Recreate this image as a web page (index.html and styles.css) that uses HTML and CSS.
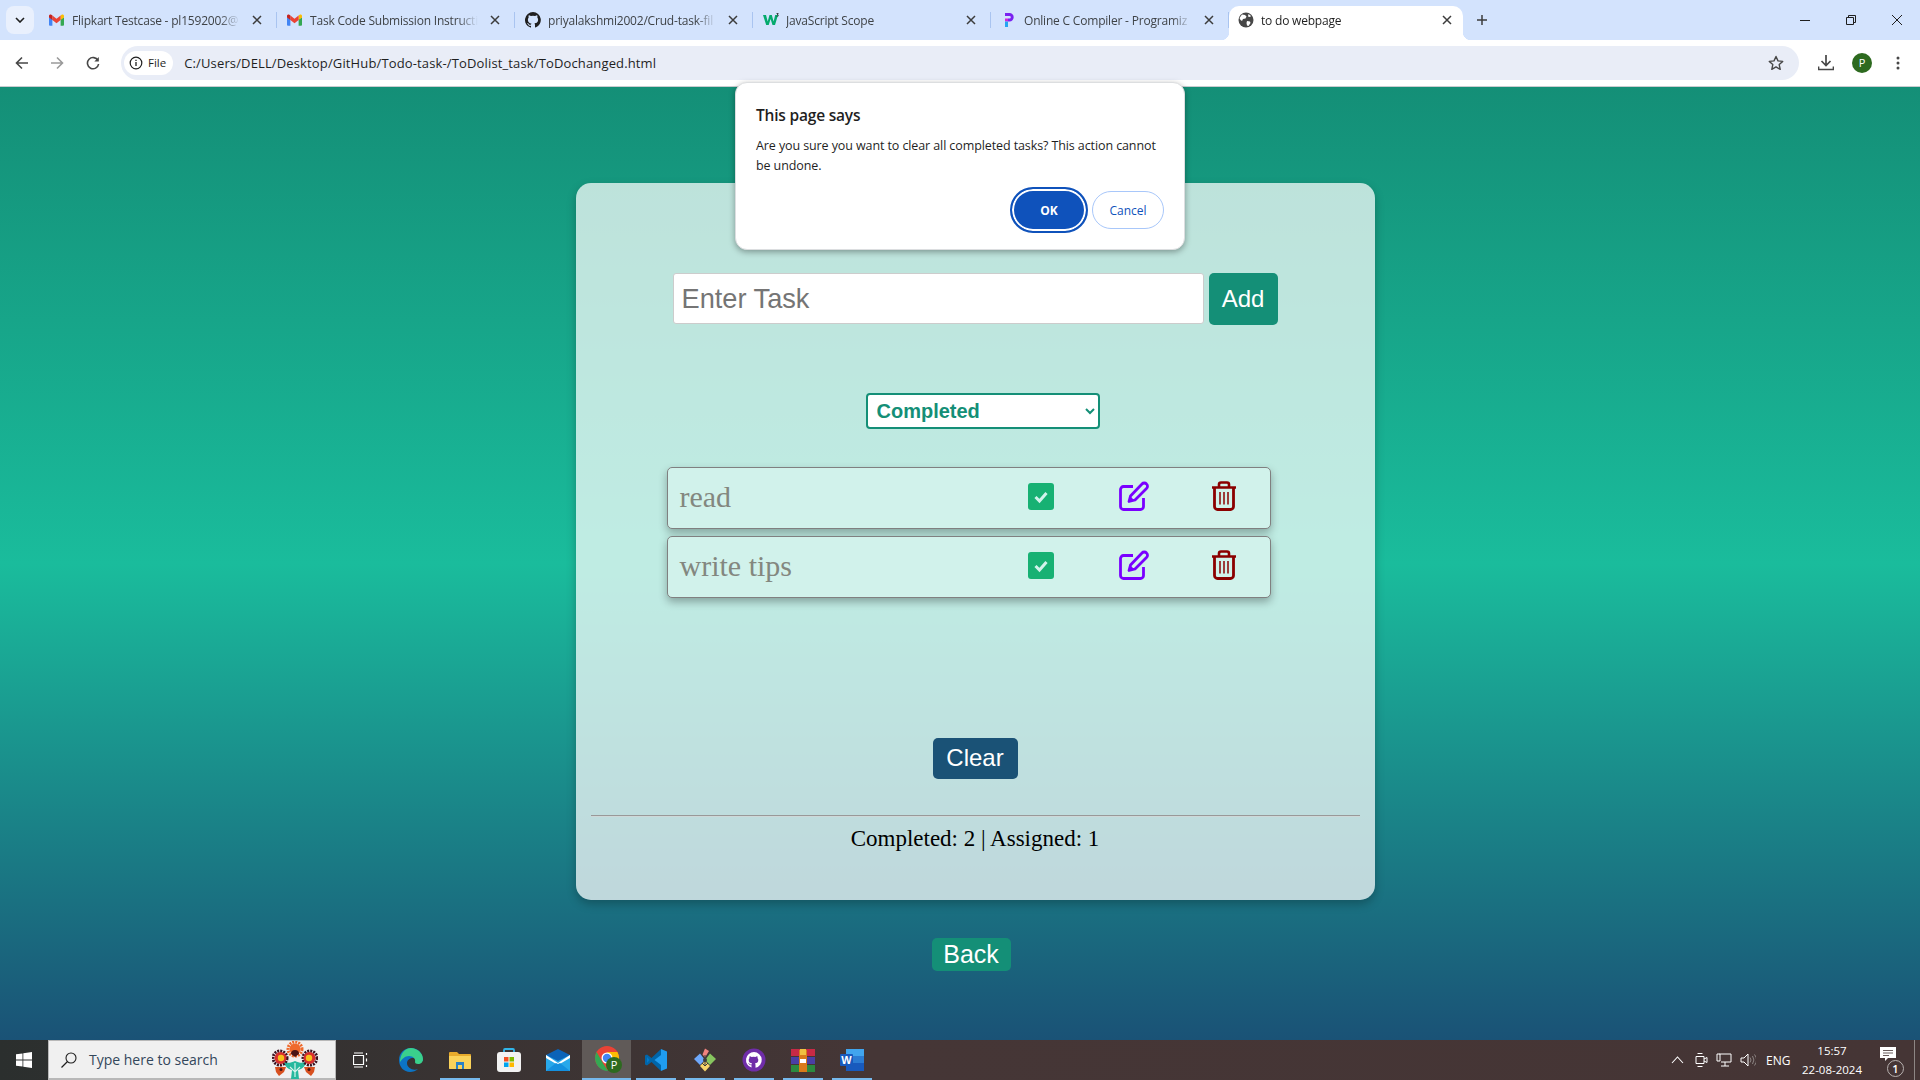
FILE: index.html
```html
<!DOCTYPE html>
<html lang="en">
<head>
  <meta charset="UTF-8">
  <title>to do webpage</title>
  <link rel="stylesheet" href="styles.css">
</head>
<body>
  <svg class="defs" width="0" height="0">
    <symbol id="gmail" viewBox="0 0 16 12">
      <path d="M0 3v8a1 1 0 0 0 1 1h2.6V5.2z" fill="#4285f4"/>
      <path d="M16 3v8a1 1 0 0 1-1 1h-2.6V5.2z" fill="#34a853"/>
      <path d="M12.4 1.2V6L16 3.2V1.6C16 .3 14.5-.4 13.5.4z" fill="#fbbc04"/>
      <path d="M3.6 6V1.2L8 4.6l4.4-3.4V6L8 9.4z" fill="#ea4335"/>
      <path d="M0 1.6v1.6L3.6 6V1.2L2.5.4C1.5-.4 0 .3 0 1.6z" fill="#c5221f"/>
    </symbol>
    <symbol id="close" viewBox="0 0 10 10">
      <path d="M1 1l8 8M9 1l-8 8" stroke="#3c3c3c" stroke-width="1.5" fill="none"/>
    </symbol>
    <symbol id="check" viewBox="0 0 26 27">
      <rect width="26" height="27" rx="3" fill="#17b173"/>
      <path d="M7.5 14l4 4 7-8" stroke="#d1f2eb" stroke-width="3" fill="none"/>
    </symbol>
    <symbol id="edit" viewBox="0 0 30 30">
      <path d="M14 5.500H4.500a3 3 0 0 0-3 3v17a3 3 0 0 0 3 3h17a3 3 0 0 0 3-3V17" fill="none" stroke="#7a00ff" stroke-width="2.800"/>
      <path d="M10 20.500l1.500-5.500L23 3a3 3 0 0 1 4.500 0 3 3 0 0 1 0 4.500L16 19z" fill="none" stroke="#7a00ff" stroke-width="2.800" stroke-linejoin="round"/>
      <path d="M11 15l4.500 4.500L10 20.500z" fill="#7a00ff"/>
    </symbol>
    <symbol id="trash" viewBox="0 0 26 30">
      <path d="M1 6.500h24M8 6V3.500A2 2 0 0 1 10 1.500h6a2 2 0 0 1 2 2V6" fill="none" stroke="#8b0000" stroke-width="2.600"/>
      <path d="M3.500 6.500V25.500a3 3 0 0 0 3 3h13a3 3 0 0 0 3-3V6.500" fill="none" stroke="#8b0000" stroke-width="2.800"/>
      <path d="M9 11v12.500M13 11v12.500M17 11v12.500" stroke="#8b0000" stroke-width="1.500"/>
    </symbol>
  </svg>

  <div class="tabstrip">
    <div class="tab-search">
      <svg width="10" height="6" viewBox="0 0 10 6"><path d="M1 1l4 4 4-4" fill="none" stroke="#1f1f1f" stroke-width="1.600"/></svg>
    </div>
    <div class="tab">
      <svg class="fav fav-mail"><use href="#gmail"/></svg>
      <span class="tab-title">Flipkart Testcase - pl1592002@</span>
      <svg class="tab-x"><use href="#close"/></svg>
    </div>
    <div class="tab">
      <svg class="fav fav-mail"><use href="#gmail"/></svg>
      <span class="tab-title">Task Code Submission Instructi</span>
      <svg class="tab-x"><use href="#close"/></svg>
    </div>
    <div class="tab">
      <svg class="fav" viewBox="0 0 16 16"><path fill="#1f1f1f" d="M8 0a8 8 0 0 0-2.500 15.600c.4.1.5-.2.500-.4v-1.400c-2.200.5-2.700-1-2.700-1-.4-.9-.9-1.200-.9-1.200-.7-.5.100-.5.100-.5.800.1 1.200.8 1.200.8.700 1.200 1.900.9 2.300.7.100-.5.300-.9.500-1.100-1.800-.2-3.600-.9-3.600-4 0-.9.300-1.600.8-2.100-.1-.2-.4-1 .1-2.100 0 0 .7-.2 2.200.8a7.600 7.600 0 0 1 4 0c1.500-1 2.200-.8 2.200-.8.400 1.100.2 1.900.1 2.100.5.600.8 1.300.8 2.100 0 3.100-1.900 3.700-3.700 3.900.3.300.6.800.6 1.500v2.200c0 .2.100.5.600.4A8 8 0 0 0 8 0z"/></svg>
      <span class="tab-title">priyalakshmi2002/Crud-task-fil</span>
      <svg class="tab-x"><use href="#close"/></svg>
    </div>
    <div class="tab">
      <svg class="fav" viewBox="0 0 16 16"><path fill="#04aa6d" d="M0 3h3l1.700 6.500L6.500 3h2.300l1.800 6.500L12.200 3H15l-3 10H9.500L7.600 7 5.700 13H3.200z"/><path fill="#1f1f1f" d="M13.500 1h2v.6l-.8.8c.6.100.9.500.9 1 0 .7-.6 1.100-1.300 1.100-.4 0-.7-.1-.9-.3l.2-.5c.2.100.4.200.7.200.3 0 .5-.2.500-.4 0-.3-.3-.4-.8-.4v-.5l.8-.9h-1.300z"/></svg>
      <span class="tab-title">JavaScript Scope</span>
      <svg class="tab-x"><use href="#close"/></svg>
    </div>
    <div class="tab">
      <svg class="fav" viewBox="0 0 16 16"><path fill="#7a22f0" d="M4 1h4.500a4.200 4.200 0 0 1 0 8.400H7V6.500h1.500a1.300 1.300 0 0 0 0-2.600H4z"/><path fill="#d326d8" d="M4 6.500h3v3H4z"/><path fill="#26a5f2" d="M4 9.500h3V15H4z"/></svg>
      <span class="tab-title">Online C Compiler - Programiz</span>
      <svg class="tab-x"><use href="#close"/></svg>
    </div>
    <div class="tab tab-active">
      <svg class="fav" viewBox="0 0 16 16"><circle cx="8" cy="8" r="7.500" fill="#474747"/><path fill="#fff" d="M4 2.500l3 .5 1.500 1.500-1 2-2.500.5-1 2L2.500 8 1.500 6zM9 9l3 .5.5 1.500-2 3-1.500-.5-.5-2.500zM10.500 2l2.500 2-1 1-2-.5z"/></svg>
      <span class="tab-title">to do webpage</span>
      <svg class="tab-x"><use href="#close"/></svg>
    </div>
    <svg class="tab-plus" width="12" height="12" viewBox="0 0 12 12"><path d="M6 1v10M1 6h10" stroke="#3c3c3c" stroke-width="1.500"/></svg>
    <div class="win-controls">
      <svg width="12" height="12" viewBox="0 0 12 12"><path d="M1 6.500h10" stroke="#1f1f1f" stroke-width="1"/></svg>
      <svg width="12" height="12" viewBox="0 0 12 12"><path d="M1.500 3.500h7v7h-7zM3.500 3.500V1.500h7v7h-2" fill="none" stroke="#1f1f1f" stroke-width="1"/></svg>
      <svg width="12" height="12" viewBox="0 0 12 12"><path d="M1 1l10 10M11 1L1 11" stroke="#1f1f1f" stroke-width="1"/></svg>
    </div>
  </div>

  <div class="toolbar">
    <svg class="nav-icon" width="14" height="14" viewBox="0 0 14 14"><path d="M13 7H2M7 1.500L1.500 7 7 12.500" fill="none" stroke="#474747" stroke-width="1.600"/></svg>
    <svg class="nav-icon" width="14" height="14" viewBox="0 0 14 14"><path d="M1 7h11M7 1.500L12.500 7 7 12.500" fill="none" stroke="#9a9a9a" stroke-width="1.600"/></svg>
    <svg class="nav-icon nav-reload" width="14" height="14" viewBox="0 0 14 14"><path d="M12 4.500A5.600 5.600 0 1 0 12.600 8" fill="none" stroke="#474747" stroke-width="1.600"/><path d="M12.800 1v4.500H8.300z" fill="#474747"/></svg>
    <div class="omnibox">
      <div class="file-chip">
        <svg width="14" height="14" viewBox="0 0 14 14"><circle cx="7" cy="7" r="5.800" fill="none" stroke="#1f1f1f" stroke-width="1.200"/><path d="M7 6v4M7 3.800v1.200" stroke="#1f1f1f" stroke-width="1.300"/></svg>
        <span>File</span>
      </div>
      <span class="url">C:/Users/DELL/Desktop/GitHub/Todo-task-/ToDolist_task/ToDochanged.html</span>
      <svg class="star" width="16" height="16" viewBox="0 0 16 16"><path d="M8 1.500l2 4.400 4.700.5-3.500 3.200 1 4.700L8 11.900l-4.200 2.400 1-4.700L1.300 6.400 6 5.900z" fill="none" stroke="#474747" stroke-width="1.400" stroke-linejoin="round"/></svg>
    </div>
    <svg class="tool-download" width="16" height="16" viewBox="0 0 16 16"><path d="M8 0v10M3.500 6L8 10.500 12.500 6M.500 11.500v3h15v-3" fill="none" stroke="#474747" stroke-width="1.700"/></svg>
    <div class="avatar">P</div>
    <svg class="tool-menu" width="4" height="14" viewBox="0 0 4 14"><circle cx="2" cy="2" r="1.500" fill="#474747"/><circle cx="2" cy="7" r="1.500" fill="#474747"/><circle cx="2" cy="12" r="1.500" fill="#474747"/></svg>
  </div>

  <main class="page">
    <section class="card">
      <div class="add-row">
        <input class="task-input" type="text" placeholder="Enter Task">
        <button class="add-btn">Add</button>
      </div>
      <select class="filter">
        <option>Completed</option>
      </select>
      <ul class="tasks">
        <li class="task">
          <span class="task-name">read</span>
          <svg class="ic-check"><use href="#check"/></svg>
          <svg class="ic-edit"><use href="#edit"/></svg>
          <svg class="ic-trash"><use href="#trash"/></svg>
        </li>
        <li class="task">
          <span class="task-name">write tips</span>
          <svg class="ic-check"><use href="#check"/></svg>
          <svg class="ic-edit"><use href="#edit"/></svg>
          <svg class="ic-trash"><use href="#trash"/></svg>
        </li>
      </ul>
      <button class="clear-btn">Clear</button>
      <hr class="rule">
      <p class="counts">Completed: 2 | Assigned: 1</p>
    </section>
    <a class="back-btn">Back</a>

    <div class="dialog">
      <h2 class="dialog-title">This page says</h2>
      <p class="dialog-msg">Are you sure you want to clear all completed tasks? This action cannot be undone.</p>
      <div class="dialog-actions">
        <button class="btn-ok">OK</button>
        <button class="btn-cancel">Cancel</button>
      </div>
    </div>
  </main>

  <footer class="taskbar">
    <div class="start">
      <svg width="16" height="16" viewBox="0 0 16 16"><path fill="#fff" d="M0 2.300l6.500-.9v6.200H0zM7.300 1.300L16 0v7.600H7.300zM0 8.400h6.500v6.200L0 13.700zM7.300 8.400H16V16l-8.700-1.200z"/></svg>
    </div>
    <div class="search">
      <svg width="16" height="16" viewBox="0 0 16 16"><circle cx="10" cy="6" r="5" fill="none" stroke="#1f1f1f" stroke-width="1.100"/><path d="M6.500 9.500L.5 15.500" stroke="#1f1f1f" stroke-width="1.300"/></svg>
      <span class="search-text">Type here to search</span>
      <svg class="doodle" width="46" height="38" viewBox="0 0 46 38">
        <path d="M23 20c-6 3-10 2-12-1 1 5 4 9 9 10l-1 9h8l-1-9c5-1 8-5 9-10-2 3-6 4-12 1z" fill="#25b89e"/>
        <path d="M23 22v14M18 26l5 5 5-5" stroke="#d8f3ec" stroke-width="1.200" fill="none"/>
        <circle cx="23" cy="8" r="5.500" fill="#ef6a2c"/>
        <circle cx="23" cy="8" r="7" fill="none" stroke="#ef6a2c" stroke-width="3" stroke-dasharray="2 1"/>
        <path d="M19 13a4 4 0 0 1 8 0l-4 3z" fill="#4a1414"/>
        <circle cx="8" cy="17" r="7" fill="none" stroke="#3d1320" stroke-width="3" stroke-dasharray="2 1"/>
        <circle cx="8.500" cy="17" r="6" fill="#d8302e"/>
        <circle cx="9" cy="17" r="3.200" fill="#f6c21c"/>
        <circle cx="38" cy="17" r="7" fill="none" stroke="#3d1320" stroke-width="3" stroke-dasharray="2 1"/>
        <circle cx="37.500" cy="17" r="6" fill="#d8302e"/>
        <circle cx="37" cy="17" r="3.200" fill="#f6c21c"/>
        <path d="M3 26h11l-2 5-5 4-3-4zM32 26h11l-1 5-3 4-5-4z" fill="#d8501f"/>
        <circle cx="9" cy="28.500" r="1.500" fill="#4a1414"/>
        <circle cx="37" cy="28.500" r="1.500" fill="#4a1414"/>
      </svg>
    </div>
    <div class="taskview">
      <svg width="16" height="16" viewBox="0 0 16 16"><path d="M.5 3.500h10v9H.5zM1 1h9M1 15h9M13.500 1v2M13.500 6.500v3M13.500 13v2" fill="none" stroke="#fff" stroke-width="1.200"/></svg>
    </div>
    <div class="apps">
      <div class="app">
        <svg width="24" height="24" viewBox="0 0 24 24"><path fill="#0c74c4" d="M12 0C5 0 0 5 0 12c0 7 5 12 11 12 3 0 6-1 8-3-5 2-11-1-11-6 0-3 3-5 6-5 3 0 6 1 6 3h4C24 5 19 0 12 0z"/><path fill="#3ad08c" d="M12 0c6 0 12 5 12 11 0 3-2 5-5 5-2 0-3-1-3-2 1-3-2-6-6-6-4 0-7 3-9 6C1 6 6 0 12 0z"/></svg>
      </div>
      <div class="app app-open">
        <svg width="22" height="18" viewBox="0 0 22 18"><path fill="#e8ab2c" d="M0 2a1 1 0 0 1 1-1h7l2 2h11a1 1 0 0 1 1 1v13a1 1 0 0 1-1 1H1a1 1 0 0 1-1-1z"/><path fill="#fbd35a" d="M0 5h22v12a1 1 0 0 1-1 1H1a1 1 0 0 1-1-1z"/><path fill="#2b83c6" d="M7 11h8v7h-2v-4H9v4H7z"/></svg>
      </div>
      <div class="app">
        <svg width="24" height="24" viewBox="0 0 24 24"><path d="M7 5V2a1 1 0 0 1 1-1h8a1 1 0 0 1 1 1v3" fill="none" stroke="#31b5e8" stroke-width="1.800"/><rect y="4" width="24" height="20" rx="3" fill="#f2f2f2"/><path fill="#f25022" d="M7 9h4.500v4.500H7z"/><path fill="#7fba00" d="M12.500 9H17v4.500h-4.500z"/><path fill="#00a4ef" d="M7 14.500h4.500V19H7z"/><path fill="#ffb900" d="M12.500 14.500H17V19h-4.500z"/></svg>
      </div>
      <div class="app">
        <svg width="24" height="22" viewBox="0 0 24 22"><path fill="#28a8ea" d="M0 6h24v16H0z"/><path fill="#0b63b8" d="M12 0l12 6-12 6L0 6z"/><path fill="#fff" d="M0 6l12 8 12-8v3l-12 7L0 9z"/><path fill="#1490df" d="M0 22l10-8 2 1 2-1 10 8z"/></svg>
      </div>
      <div class="app app-active">
        <svg class="chrome-ic" width="28" height="28" viewBox="0 0 28 28"><circle cx="12" cy="12" r="12" fill="#ea4335"/><path fill="#34a853" d="M1.600 6L8 17.200l5 7.800C6 25 0 19 0 12c0-2 .6-4.300 1.600-6z"/><path fill="#fbbc04" d="M12 6h10.400A12 12 0 0 1 13 24l5-10z"/><circle cx="12" cy="12" r="5.500" fill="#fff"/><circle cx="12" cy="12" r="4.200" fill="#4285f4"/><circle cx="19" cy="19" r="8" fill="#2d6a1f"/><text class="chrome-p" x="19" y="23">P</text></svg>
      </div>
      <div class="app app-open">
        <svg width="24" height="24" viewBox="0 0 24 24"><path fill="#0065a9" d="M17 1L7.500 10 3 6.500 1 7.500v9l2 1L7.500 14 17 23z"/><path fill="#1f9cf0" d="M17 1l6 2.500v17L17 23zM17 7l-6.500 5 6.500 5z"/><path fill="#007acc" d="M3 9l2.500 3L3 15z"/></svg>
      </div>
      <div class="app app-open">
        <svg width="24" height="24" viewBox="0 0 24 24"><path fill="#f0837e" d="M12 .5l4 2.500-4 6.500-2.500-3z"/><path fill="#6ea8fb" d="M7 5.500L12 12l-5 5-6-6z"/><path fill="#87c55f" d="M17 5.500l6 5.500-6 6-5-5z"/><path fill="#f7d56a" d="M12 13l5 5-5 5.500L7 18z"/><circle cx="12" cy="12" r="2" fill="#3c3c3c"/><path d="M12 7v10M9 15l3 3 3-3" stroke="#3c3c3c" fill="none"/></svg>
      </div>
      <div class="app app-open">
        <svg width="24" height="24" viewBox="0 0 24 24"><circle cx="12" cy="12" r="11.500" fill="#6f2da8"/><path fill="#fff" d="M12 4a8 8 0 0 0-2.500 15.600v-2.400c-1.700.4-2.400-.6-2.700-1.400-.4-.6-.7-.8-.7-.8.700 0 1.200.6 1.500 1 .6.800 1.500.6 2 .4.100-.5.300-.8.500-1-2-.2-3.400-1.200-3.400-3.400 0-.8.300-1.500.8-2-.1-.3-.2-1 .1-1.800.7-.1 1.500.4 2 .8a7 7 0 0 1 3.800 0c.5-.4 1.300-.9 2-.8.300.8.200 1.500.1 1.800.5.500.8 1.200.8 2 0 2.200-1.400 3.200-3.400 3.400.3.300.6.700.6 1.400v3A8 8 0 0 0 12 4z"/></svg>
      </div>
      <div class="app app-open">
        <svg width="24" height="24" viewBox="0 0 24 24"><path fill="#c82a45" d="M0 1h24v7H0z"/><path fill="#4a3fa5" d="M0 9h24v7H0z"/><path fill="#2c8a3f" d="M0 17h24v7H0z"/><path fill="#d97a1a" d="M8 2h8v22H8z"/><path fill="#f0c040" d="M9 1h6v6H9z"/><path fill="#fff" d="M9 11h6v4H9z"/></svg>
      </div>
      <div class="app app-open">
        <svg width="24" height="24" viewBox="0 0 24 24"><path fill="#41a5ee" d="M6 1h18v7H6z"/><path fill="#2b7cd3" d="M6 8h18v7H6z"/><path fill="#185abd" d="M6 15h18v8H6z"/><rect y="6" width="13" height="12" rx="1" fill="#185abd"/><text class="word-w" x="6.500" y="16">W</text></svg>
      </div>
    </div>
    <div class="tray">
      <svg class="tray-chev" width="13" height="8" viewBox="0 0 13 8"><path d="M1 7l5.500-6L12 7" fill="none" stroke="#fff" stroke-width="1.100"/></svg>
      <svg class="tray-ic" width="13" height="16" viewBox="0 0 13 16"><path d="M1 4.500h8v7H1zM9 7l3-1.500v5L9 9M2.500 1.500h5M2.500 14.500h5" fill="none" stroke="#fff"/></svg>
      <svg class="tray-ic" width="16" height="14" viewBox="0 0 16 14"><path d="M3.500 1H15v8H5M1 1h3v7H1zM9 9v4M5 13h8" fill="none" stroke="#fff"/></svg>
      <svg class="tray-ic" width="16" height="14" viewBox="0 0 16 14"><path d="M1 5h3l4-4v12L4 9H1z" fill="none" stroke="#fff"/><path d="M10 4.500a4 4 0 0 1 0 5M12.500 3a7 7 0 0 1 0 8M14.500 1.500a9 9 0 0 1 0 11" fill="none" stroke="#8d8684"/></svg>
      <span class="tray-lang">ENG</span>
      <div class="clock">
        <span>15:57</span>
        <span>22-08-2024</span>
      </div>
      <div class="notify">
        <svg width="16" height="14" viewBox="0 0 16 14"><path fill="#fff" d="M0 0h16v11H8l-3 3v-3H0z"/><path d="M3 3.500h10M3 6h10M3 8.500h6" stroke="#453535" stroke-width=".8"/></svg>
        <span class="notify-badge">1</span>
      </div>
      <div class="show-desktop"></div>
    </div>
  </footer>
</body>
</html>
```

FILE: styles.css
```css
* { box-sizing: border-box; }
html, body { height: 100%; }
body {
  margin: 0;
  display: flex;
  flex-direction: column;
  overflow: hidden;
  font-family: "Open Sans", "Noto Sans", sans-serif;
  color: #1f1f1f;
}
.defs { position: absolute; }

/* browser tabs */
.tabstrip {
  height: 40px;
  flex: none;
  display: flex;
  align-items: flex-end;
  background: #d3e3fd;
  padding-left: 6px;
}
.tab-search {
  width: 28px;
  height: 28px;
  margin: 0 5px 6px 0;
  border-radius: 8px;
  background: #e9f0fd;
  display: flex;
  align-items: center;
  justify-content: center;
}
.tab {
  width: 238px;
  height: 34px;
  flex: none;
  display: flex;
  align-items: center;
  padding: 0 12px 6px 10px;
  position: relative;
  font-size: 12px;
  color: #3f4347;
  background-clip: padding-box;
}
.tab:not(.tab-active)::after {
  content: "";
  position: absolute;
  right: 0;
  top: 6px;
  height: 16px;
  border-right: 1px solid #a9c4f0;
}
.fav { width: 16px; height: 16px; flex: none; margin-right: 7px; }
.fav-mail { width: 15px; height: 12px; margin-right: 8px; }
.tab-title {
  flex: 1;
  min-width: 0;
  white-space: nowrap;
  overflow: hidden;
  margin-right: 9px;
  letter-spacing: -0.2px;
  -webkit-mask-image: linear-gradient(to right, #000 88%, transparent);
  mask-image: linear-gradient(to right, #000 88%, transparent);
}
.tab-x { width: 10px; height: 10px; flex: none; margin: 0 3px; }
.tab-active {
  width: 234px;
  background: #fff;
  border-radius: 10px 10px 0 0;
  padding: 0 8px 6px 9px;
  color: #1f1f1f;
}
.tab-active::before, .tab-active::after {
  content: "";
  position: absolute;
  bottom: 0;
  width: 8px;
  height: 8px;
}
.tab-active::before { left: -8px; background: radial-gradient(circle at 0 0, transparent 8px, #fff 8.5px); }
.tab-active::after { right: -8px; background: radial-gradient(circle at 100% 0, transparent 8px, #fff 8.5px); }
.tab-plus { margin: 0 0 14px 13px; }
.win-controls {
  margin-left: auto;
  align-self: flex-start;
  display: flex;
  gap: 34px;
  padding: 14px 17px 0 0;
}

/* address bar */
.toolbar {
  height: 47px;
  flex: none;
  display: flex;
  align-items: center;
  background: #fff;
  border-bottom: 1px solid #c9ccd0;
  border-radius: 8px 8px 0 0;
  padding: 0 0 1px 15px;
}
.nav-icon { margin-right: 21px; }
.nav-reload { margin: 0 21px 0 1px; }
.omnibox {
  width: 1678px;
  height: 34px;
  border-radius: 17px;
  background: #e9edf7;
  display: flex;
  align-items: center;
  padding: 0 15px 0 3px;
  font-size: 13px;
}
.file-chip {
  height: 24px;
  padding: 0 7px 0 5px;
  border-radius: 12px;
  background: #fff;
  display: flex;
  align-items: center;
  gap: 5px;
  font-size: 11.5px;
}
.url { margin-left: 11px; color: #1f1f1f; letter-spacing: 0.14px; }
.star { margin-left: auto; }
.tool-download { margin-left: 19px; }
.avatar {
  width: 20px;
  height: 20px;
  margin-left: 18px;
  border-radius: 50%;
  background: #2d6a1f;
  color: #fff;
  font-size: 11px;
  text-align: center;
  line-height: 20px;
}
.tool-menu { margin-left: 24px; }

/* page */
.page {
  flex: 1;
  position: relative;
  display: flex;
  flex-direction: column;
  align-items: center;
  padding: 96px 0 0 30px;
  background: linear-gradient(to bottom, #148f77, #1abc9c, #1a5276);
  font-family: "Liberation Serif", serif;
}
.card {
  width: 799px;
  height: 717px;
  padding: 90px 15px 0;
  display: flex;
  flex-direction: column;
  align-items: center;
  background: rgba(255, 255, 255, 0.72);
  border-radius: 15px;
  box-shadow: 0 4px 10px rgba(0, 0, 0, 0.25);
}
.add-row { display: flex; align-items: flex-start; gap: 5px; height: 51px; }
.task-input {
  width: 531px;
  height: 51px;
  padding: 0 8px;
  border: 1px solid #ccc;
  border-radius: 3px;
  background: #fff;
  font-family: "Liberation Sans", sans-serif;
  font-size: 27.2px;
}
.task-input::placeholder { color: #757575; opacity: 1; }
.add-btn, .clear-btn, .back-btn {
  border: none;
  border-radius: 5px;
  color: #fff;
  font-family: "Liberation Sans", sans-serif;
  font-size: 24px;
}
.add-btn { width: 69px; height: 52px; background: #148f77; }
.filter {
  width: 234px;
  height: 36px;
  margin: 69px 0 0 15px;
  padding: 0 5px;
  border: 2px solid #148f77;
  border-radius: 4px;
  background: #fff;
  color: #148f77;
  font-family: "Liberation Sans", sans-serif;
  font-size: 20px;
  font-weight: bold;
}
.tasks {
  list-style: none;
  width: 604px;
  margin: 38px 13px 0 0;
  padding: 0;
  display: flex;
  flex-direction: column;
  gap: 7.5px;
}
.task {
  height: 61.5px;
  display: grid;
  grid-template-columns: 1fr 91px 92px 59px;
  align-items: center;
  padding-left: 12px;
  background: #d1f2eb;
  border: 1px solid #808080;
  border-radius: 5px;
  box-shadow: 0 4px 8px rgba(0, 0, 0, 0.3);
}
.task-name { font-size: 30px; color: #83877f; margin-top: -2px; }
.ic-check { width: 26px; height: 27px; margin-top: -3px; }
.ic-edit { width: 30px; height: 30px; margin-top: -3px; }
.ic-trash { width: 26px; height: 30px; margin-top: -3px; }
.clear-btn {
  width: 85px;
  height: 41px;
  margin-top: 140px;
  background: #1a5276;
}
.rule {
  width: 100%;
  margin: 36px 0 0;
  border: none;
  border-top: 1px solid #999;
  border-bottom: 1px solid #cfd8d8;
}
.counts {
  margin: 8px 0 0;
  font-size: 23px;
  line-height: 28px;
  color: #000;
}
.back-btn {
  width: 79px;
  height: 33px;
  margin: 38px 8px 0 0;
  background: #148f77;
  font-size: 25px;
  line-height: 33px;
  text-align: center;
}

/* javascript confirm box */
.dialog {
  position: absolute;
  left: 735px;
  top: -5px;
  width: 450px;
  height: 168px;
  padding: 21px 20px 0;
  background: #fff;
  border: 1px solid #dcdee0;
  border-radius: 12px;
  box-shadow: 0 2px 6px rgba(0, 0, 0, 0.35);
  font-family: "Open Sans", "Noto Sans", sans-serif;
  color: #1f1f1f;
}
.dialog-title { margin: 0; font-size: 15.5px; line-height: 22px; font-weight: 600; letter-spacing: -0.2px; }
.dialog-msg { margin: 10px 0 0; font-size: 12.5px; line-height: 20px; letter-spacing: -0.1px; }
.dialog-actions {
  position: absolute;
  right: 20px;
  top: 104px;
  display: flex;
  align-items: center;
  gap: 4px;
}
.dialog-actions button { font-family: inherit; font-size: 12px; border-radius: 20px; padding: 0; }
.btn-ok {
  width: 78px;
  height: 46px;
  background: #0f52bb;
  color: #fff;
  font-weight: 700;
  border: 2px solid #0f52bb;
  box-shadow: inset 0 0 0 2px #fff;
  border-radius: 23px !important;
}
.btn-cancel {
  width: 72px;
  height: 38px;
  background: #fff;
  color: #0f52bb;
  border: 1px solid #a8c7fa;
}

/* windows taskbar */
.taskbar {
  height: 40px;
  flex: none;
  display: flex;
  align-items: stretch;
  background: linear-gradient(to right, #2b2f2e, #453636 45%, #453535);
  color: #fff;
  font-size: 12px;
}
.start { width: 48px; display: flex; align-items: center; justify-content: center; }
.search {
  width: 288px;
  display: flex;
  align-items: center;
  padding-left: 12px;
  background: #f0f0f0;
  border: 1px solid #b8b8b8;
  border-bottom-width: 2px;
  color: #33475b;
  font-size: 14px;
}
.search-text { margin-left: 12px; }
.doodle { margin-left: auto; margin-right: 17px; }
.taskview { width: 50px; display: flex; align-items: center; justify-content: center; }
.apps { display: flex; }
.app {
  width: 49px;
  display: flex;
  align-items: center;
  justify-content: center;
  position: relative;
}
.app-open::after {
  content: "";
  position: absolute;
  left: 5px;
  right: 4px;
  bottom: 0;
  height: 2px;
  background: #76b9ed;
}
.app-active { background: #605a58; }
.app-active::after {
  content: "";
  position: absolute;
  left: 0;
  right: 0;
  bottom: 0;
  height: 2px;
  background: #76b9ed;
}
.chrome-ic { margin-left: 4px; }
.chrome-p { font-family: "Open Sans", sans-serif; font-size: 11px; fill: #fff; text-anchor: middle; }
.word-w { font-family: "Liberation Sans", sans-serif; font-size: 11px; font-weight: bold; fill: #fff; text-anchor: middle; }
.tray { margin-left: auto; display: flex; align-items: center; }
.tray-chev { margin-right: 11px; }
.tray-ic { margin-right: 8px; }
.tray-lang { margin: 0 8.500px 0 2.500px; font-size: 12px; }
.clock {
  width: 66px;
  display: flex;
  flex-direction: column;
  align-items: center;
  gap: 3px;
  font-size: 11.5px;
  line-height: 16px;
  margin-right: 12px;
}
.notify { position: relative; width: 32px; height: 32px; margin-top: -4px; padding: 5px 0 0 3px; }
.notify-badge {
  position: absolute;
  right: 5px;
  bottom: -3px;
  width: 17px;
  height: 17px;
  border-radius: 50%;
  background: #453535;
  border: 1px solid #b8b2b0;
  font-size: 11px;
  font-weight: 600;
  line-height: 15px;
  text-align: center;
}
.show-desktop { width: 6px; height: 100%; margin-left: 5px; border-left: 1px solid #8d8684; }
```
